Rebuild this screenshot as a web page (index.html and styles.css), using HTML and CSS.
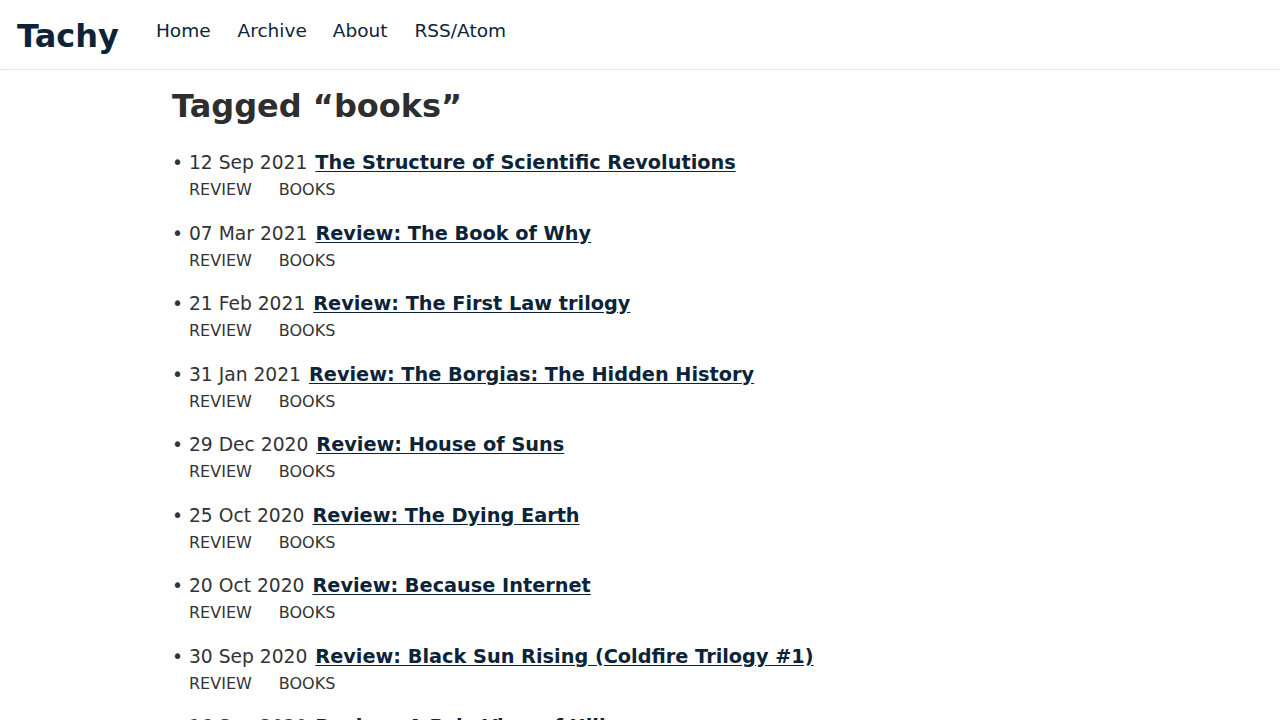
FILE: index.html
```html
<!DOCTYPE html>
<html lang="en">
<head>
<meta charset="utf-8">
<title>Tagged “books” - Tachy</title>
<link rel="stylesheet" href="styles.css">
</head>
<body>
<header class="site-header">
  <a class="brand" href="#">Tachy</a>
  <nav class="nav">
    <a href="#">Home</a>
    <a href="#">Archive</a>
  </nav>
  <nav class="nav">
    <a href="#">About</a>
    <a href="#">RSS/Atom</a>
  </nav>
</header>
<main class="content">
  <h1 class="page-title">Tagged “books”</h1>
  <ul class="posts">
    <li class="post">
      <div class="entry"><span class="date">• 12 Sep 2021</span> <a class="title" href="#">The Structure of Scientific Revolutions</a></div>
      <div class="tags"><a href="#">review</a><a href="#">books</a></div>
    </li>
    <li class="post">
      <div class="entry"><span class="date">• 07 Mar 2021</span> <a class="title" href="#">Review: The Book of Why</a></div>
      <div class="tags"><a href="#">review</a><a href="#">books</a></div>
    </li>
    <li class="post">
      <div class="entry"><span class="date">• 21 Feb 2021</span> <a class="title" href="#">Review: The First Law trilogy</a></div>
      <div class="tags"><a href="#">review</a><a href="#">books</a></div>
    </li>
    <li class="post">
      <div class="entry"><span class="date">• 31 Jan 2021</span> <a class="title" href="#">Review: The Borgias: The Hidden History</a></div>
      <div class="tags"><a href="#">review</a><a href="#">books</a></div>
    </li>
    <li class="post">
      <div class="entry"><span class="date">• 29 Dec 2020</span> <a class="title" href="#">Review: House of Suns</a></div>
      <div class="tags"><a href="#">review</a><a href="#">books</a></div>
    </li>
    <li class="post">
      <div class="entry"><span class="date">• 25 Oct 2020</span> <a class="title" href="#">Review: The Dying Earth</a></div>
      <div class="tags"><a href="#">review</a><a href="#">books</a></div>
    </li>
    <li class="post">
      <div class="entry"><span class="date">• 20 Oct 2020</span> <a class="title" href="#">Review: Because Internet</a></div>
      <div class="tags"><a href="#">review</a><a href="#">books</a></div>
    </li>
    <li class="post">
      <div class="entry"><span class="date">• 30 Sep 2020</span> <a class="title" href="#">Review: Black Sun Rising (Coldfire Trilogy #1)</a></div>
      <div class="tags"><a href="#">review</a><a href="#">books</a></div>
    </li>
    <li class="post">
      <div class="entry"><span class="date">• 16 Sep 2020</span> <a class="title" href="#">Review: A Pale View of Hills</a></div>
      <div class="tags"><a href="#">review</a><a href="#">books</a></div>
    </li>
  </ul>
</main>
</body>
</html>
```
FILE: styles.css
```css
html { font-size: 18.4px; }
body {
  margin: 0;
  font-family: "DejaVu Sans", sans-serif;
  color: #333;
  background: #fff;
}
a { color: #0d2438; text-decoration: none; }

.site-header {
  display: flex;
  align-items: center;
  height: 70px;
  padding: 0 0 0 17px;
  border-bottom: 1px dotted #d6d6d6;
  box-sizing: border-box;
}
.brand {
  font-size: 32px;
  font-weight: bold;
  color: #0d2438;
  margin-right: 37px;
  margin-top: 2px;
}
.nav {
  display: flex;
  gap: 27px;
  margin-right: 26px;
  margin-top: -8px;
}
.nav a { color: #0d2438; font-size: 18.5px; }

.content {
  max-width: 936px;
  margin: 0 auto;
}
.page-title {
  font-size: 32px;
  line-height: 40px;
  margin: 16px 0 23px;
  color: #2e2e2e;
}
.posts {
  list-style: none;
  margin: 0;
  padding: 0;
}
.post { margin-bottom: 16.5px; }
.entry {
  font-size: 18.7px;
  line-height: 27px;
}
.date { color: #333; margin-right: 2px; }
.title {
  font-size: 19.3px;
  font-weight: bold;
  text-decoration: underline;
  text-underline-offset: 2px;
}
.tags {
  line-height: 27px;
  padding-left: 17px;
  font-size: 16px;
}
.tags a {
  color: #333;
  text-transform: uppercase;
  margin-right: 27px;
}
```
